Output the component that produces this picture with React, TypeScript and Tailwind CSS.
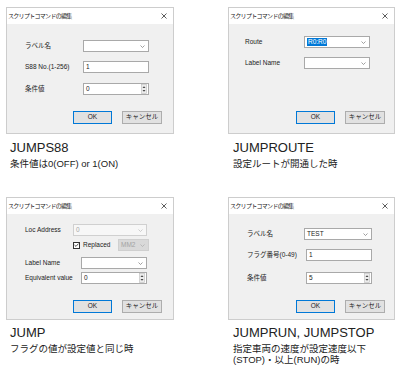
import React from "react";

const FONT = { fontFamily: '"Liberation Sans", "Noto Sans CJK JP", sans-serif' };

function CloseX() {
  return (
    <svg width="6" height="6" viewBox="0 0 6 6">
      <path d="M0.5 0.5 L5.5 5.5 M5.5 0.5 L0.5 5.5" stroke="#333" strokeWidth="0.8" fill="none" />
    </svg>
  );
}

function Chevron({ color = "#777" }: { color?: string }) {
  return (
    <svg width="5" height="3" viewBox="0 0 5 3" className="shrink-0">
      <path d="M0.5 0.5 L2.5 2.5 L4.5 0.5" stroke={color} strokeWidth="0.7" fill="none" />
    </svg>
  );
}

function Spinner() {
  return (
    <svg width="6" height="10" viewBox="0 0 6 10" className="shrink-0">
      <rect x="0.5" y="0.5" width="5" height="9" fill="#ececec" stroke="#bdbdbd" strokeWidth="0.6" />
      <path d="M1.5 4 L3 2.3 L4.5 4 Z" fill="#444" />
      <path d="M1.5 6 L3 7.7 L4.5 6 Z" fill="#444" />
    </svg>
  );
}

function Dialog({ className, children }: { className: string; children: React.ReactNode }) {
  return (
    <div className={"flex flex-col border border-[#cdcdcd] bg-[#f0f0f0] " + className}>
      <div className="flex h-[16px] shrink-0 items-center justify-between bg-white pl-[1px] pr-[6px]">
        <span className="text-[6px] leading-none tracking-[-0.7px] text-[#222]">スクリプトコマンドの編集</span>
        <CloseX />
      </div>
      {children}
    </div>
  );
}

function Buttons({ className }: { className: string }) {
  return (
    <div className={"flex " + className}>
      <div className="flex h-[13px] w-[39px] items-center justify-center border border-[#0078d7] bg-[#e1e1e1] text-[6.5px] leading-none text-[#222]">
        OK
      </div>
      <div className="ml-[10px] flex h-[13px] w-[40px] items-center justify-center border border-[#adadad] bg-[#e1e1e1] text-[6.5px] leading-none text-[#222]">
        キャンセル
      </div>
    </div>
  );
}

function Label({ className, children }: { className: string; children: React.ReactNode }) {
  return <div className={"shrink-0 text-[6.5px] leading-none text-[#222] " + className}>{children}</div>;
}

function Input({ className, value, spin }: { className: string; value?: string; spin?: boolean }) {
  return (
    <div className={"flex h-[12px] items-center justify-between border border-[#a9a9a9] bg-white pl-[2px] pr-[1px] text-[6.5px] leading-none text-[#222] " + className}>
      <span>{value}</span>
      {spin && <Spinner />}
    </div>
  );
}

function Combo({ className, value, selected, disabled }: { className: string; value?: string; selected?: boolean; disabled?: boolean }) {
  return (
    <div
      className={
        "flex h-[12px] items-center justify-between border pl-[2px] pr-[3px] text-[6.5px] leading-none " +
        (disabled ? "border-[#d0d0d0] bg-[#f7f7f7] text-[#a6a6a6] " : "border-[#a9a9a9] bg-white text-[#222] ") +
        className
      }
    >
      {selected ? <span className="bg-[#0078d7] px-[1px] py-[1px] text-white">{value}</span> : <span>{value}</span>}
      <Chevron color={disabled ? "#bbb" : "#777"} />
    </div>
  );
}

function Caption({ title, children, className }: { title: string; children: React.ReactNode; className: string }) {
  return (
    <div className={className}>
      <div className="text-[13px] leading-[15px] text-[#222]">{title}</div>
      <div className="mt-[3px] text-[9.5px] leading-[11px] text-[#222]">{children}</div>
    </div>
  );
}

export default function App() {
  return (
    <div className="h-[378px] w-[400px] bg-white" style={FONT}>
      <div className="grid grid-cols-[200px_200px] grid-rows-[190px_188px]">
        {/* Dialog 1: JUMPS88 */}
        <div className="pl-[6px] pt-[7px]">
          <Dialog className="h-[127px] w-[168px]">
            <div className="flex flex-col pl-[18px] pt-[16px]">
              <div className="flex h-[12px] items-center">
                <Label className="w-[58px]">ラベル名</Label>
                <Combo className="w-[66px]" />
              </div>
              <div className="mt-[9px] flex h-[12px] items-center">
                <Label className="w-[58px]">S88 No.(1-256)</Label>
                <Input className="w-[66px]" value="1" />
              </div>
              <div className="mt-[10px] flex h-[12px] items-center">
                <Label className="w-[58px]">条件値</Label>
                <Input className="w-[66px]" value="0" spin />
              </div>
              <Buttons className="ml-[48px] mt-[16px]" />
            </div>
          </Dialog>
          <Caption title="JUMPS88" className="ml-[4px] mt-[6px]">
            条件値は0(OFF) or 1(ON)
          </Caption>
        </div>

        {/* Dialog 2: JUMPROUTE */}
        <div className="pl-[28px] pt-[7px]">
          <Dialog className="h-[127px] w-[167px]">
            <div className="flex flex-col pl-[16px] pt-[12px]">
              <div className="flex h-[12px] items-center">
                <Label className="w-[59px]">Route</Label>
                <Combo className="w-[66px]" value="R0:R0" selected />
              </div>
              <div className="mt-[9px] flex h-[12px] items-center">
                <Label className="w-[59px]">Label Name</Label>
                <Combo className="w-[66px]" />
              </div>
              <Buttons className="ml-[51px] mt-[42px]" />
            </div>
          </Dialog>
          <Caption title="JUMPROUTE" className="ml-[5px] mt-[6px]">
            設定ルートが開通した時
          </Caption>
        </div>

        {/* Dialog 3: JUMP */}
        <div className="pl-[6px] pt-[7px]">
          <Dialog className="h-[123px] w-[168px]">
            <div className="flex flex-col pl-[18px] pt-[10px]">
              <div className="flex h-[12px] items-center">
                <Label className="w-[48px]">Loc Address</Label>
                <Combo className="w-[74px]" value="0" disabled />
              </div>
              <div className="mt-[3px] flex h-[12px] items-center">
                <div className="ml-[48px] flex h-[7px] w-[7px] items-center justify-center border border-[#333] bg-white">
                  <svg width="5" height="4" viewBox="0 0 5 4">
                    <path d="M0.5 2 L2 3.4 L4.5 0.6" stroke="#222" strokeWidth="0.8" fill="none" />
                  </svg>
                </div>
                <Label className="ml-[3px] w-[33px]">Replaced</Label>
                <div className="ml-[2px] flex h-[12px] w-[31px] items-center justify-between border border-[#cfcfcf] bg-[#d9d9d9] pl-[2px] pr-[3px] text-[6.5px] leading-none text-[#a3a3a3]">
                  <span>MM2</span>
                  <Chevron color="#aaa" />
                </div>
              </div>
              <div className="mt-[6px] flex h-[12px] items-center">
                <Label className="w-[56px]">Label Name</Label>
                <Combo className="w-[66px]" />
              </div>
              <div className="mt-[3px] flex h-[12px] items-center">
                <Label className="w-[56px]">Equivalent value</Label>
                <Input className="w-[66px]" value="0" spin />
              </div>
              <Buttons className="ml-[48px] mt-[16px]" />
            </div>
          </Dialog>
          <Caption title="JUMP" className="ml-[4px] mt-[5px]">
            フラグの値が設定値と同じ時
          </Caption>
        </div>

        {/* Dialog 4: JUMPRUN, JUMPSTOP */}
        <div className="pl-[28px] pt-[7px]">
          <Dialog className="h-[123px] w-[167px]">
            <div className="flex flex-col pl-[18px] pt-[14px]">
              <div className="flex h-[12px] items-center">
                <Label className="w-[57px]">ラベル名</Label>
                <Combo className="w-[68px]" value="TEST" />
              </div>
              <div className="mt-[9px] flex h-[12px] items-center">
                <Label className="w-[59px]">フラグ番号(0-49)</Label>
                <Input className="w-[66px]" value="1" />
              </div>
              <div className="mt-[11px] flex h-[12px] items-center">
                <Label className="w-[59px]">条件値</Label>
                <Input className="w-[66px]" value="5" spin />
              </div>
              <Buttons className="ml-[49px] mt-[16px]" />
            </div>
          </Dialog>
          <Caption title="JUMPRUN, JUMPSTOP" className="ml-[5px] mt-[5px]">
            指定車両の速度が設定速度以下
            <br />
            (STOP)・以上(RUN)の時
          </Caption>
        </div>
      </div>
    </div>
  );
}
